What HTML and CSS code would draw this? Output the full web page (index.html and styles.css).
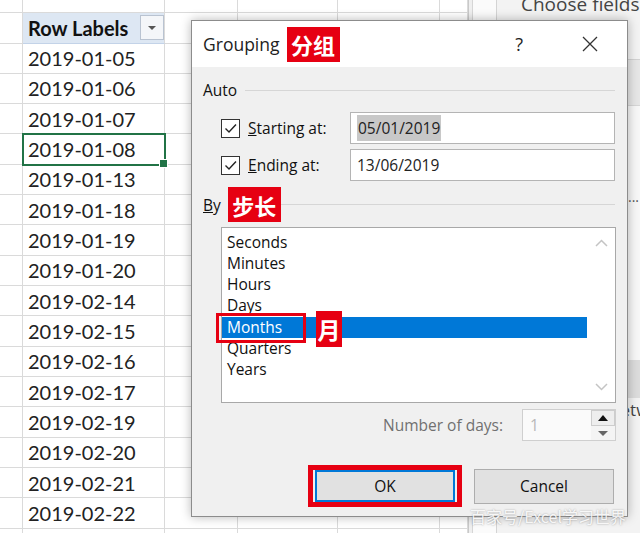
FILE: index.html
```html
<!DOCTYPE html>
<html lang="en">
<head>
<meta charset="utf-8">
<title>Grouping</title>
<link rel="stylesheet" href="styles.css">
</head>
<body>
<div class="app">
  <div class="sheet">
    <div class="row top"><span class="c"></span><span class="c"></span><span class="c"></span><span class="c"></span><span class="c"></span><span class="c"></span></div>
    <div class="row head"><span class="c"></span><span class="c hcell"><span class="htext">Row Labels</span><span class="dd"><span class="tri"></span></span></span><span class="c"></span><span class="c"></span><span class="c"></span><span class="c"></span></div>
    <div class="row"><span class="c"></span><span class="c lab">2019-01-05</span><span class="c"></span><span class="c"></span><span class="c"></span><span class="c"></span></div>
    <div class="row"><span class="c"></span><span class="c lab">2019-01-06</span><span class="c"></span><span class="c"></span><span class="c"></span><span class="c"></span></div>
    <div class="row"><span class="c"></span><span class="c lab">2019-01-07</span><span class="c"></span><span class="c"></span><span class="c"></span><span class="c"></span></div>
    <div class="row"><span class="c"></span><span class="c lab sel">2019-01-08</span><span class="c"></span><span class="c"></span><span class="c"></span><span class="c"></span></div>
    <div class="row"><span class="c"></span><span class="c lab">2019-01-13</span><span class="c"></span><span class="c"></span><span class="c"></span><span class="c"></span></div>
    <div class="row"><span class="c"></span><span class="c lab">2019-01-18</span><span class="c"></span><span class="c"></span><span class="c"></span><span class="c"></span></div>
    <div class="row"><span class="c"></span><span class="c lab">2019-01-19</span><span class="c"></span><span class="c"></span><span class="c"></span><span class="c"></span></div>
    <div class="row"><span class="c"></span><span class="c lab">2019-01-20</span><span class="c"></span><span class="c"></span><span class="c"></span><span class="c"></span></div>
    <div class="row"><span class="c"></span><span class="c lab">2019-02-14</span><span class="c"></span><span class="c"></span><span class="c"></span><span class="c"></span></div>
    <div class="row"><span class="c"></span><span class="c lab">2019-02-15</span><span class="c"></span><span class="c"></span><span class="c"></span><span class="c"></span></div>
    <div class="row"><span class="c"></span><span class="c lab">2019-02-16</span><span class="c"></span><span class="c"></span><span class="c"></span><span class="c"></span></div>
    <div class="row"><span class="c"></span><span class="c lab">2019-02-17</span><span class="c"></span><span class="c"></span><span class="c"></span><span class="c"></span></div>
    <div class="row"><span class="c"></span><span class="c lab">2019-02-19</span><span class="c"></span><span class="c"></span><span class="c"></span><span class="c"></span></div>
    <div class="row"><span class="c"></span><span class="c lab">2019-02-20</span><span class="c"></span><span class="c"></span><span class="c"></span><span class="c"></span></div>
    <div class="row"><span class="c"></span><span class="c lab">2019-02-21</span><span class="c"></span><span class="c"></span><span class="c"></span><span class="c"></span></div>
    <div class="row"><span class="c"></span><span class="c lab">2019-02-22</span><span class="c"></span><span class="c"></span><span class="c"></span><span class="c"></span></div>
    <div class="row"><span class="c"></span><span class="c"></span><span class="c"></span><span class="c"></span><span class="c"></span><span class="c"></span></div>
  </div>
  <div class="divider"><span class="split"></span><span class="gutter"></span></div>
  <div class="pane">
    <div class="p-head"><span class="p-title">Choose fields to add to report:</span></div>
    <div class="p-search"></div>
    <div class="p-list"><span class="p-more">···</span></div>
    <div class="p-band"></div>
    <div class="p-areas"><span class="p-text">Drag fields between areas below:</span></div>
  </div>
</div>

<div class="dialog">
  <div class="titlebar">
    <span class="title">Grouping</span>
    <span class="tag tag-title">分组</span>
    <span class="help">?</span>
    <svg class="close" width="16" height="16" viewBox="0 0 16 16"><path d="M1 1L15 15M15 1L1 15"/></svg>
  </div>
  <div class="dbody">
    <div class="ghead">
      <span class="gname">Auto</span>
      <span class="rule"></span>
    </div>
    <div class="field">
      <span class="chk"><svg width="17" height="17" viewBox="0 0 17 17"><path d="M3.5 8.5L7 12L14 4.5"/></svg></span>
      <span class="flabel"><u>S</u>tarting at:</span>
      <span class="input"><span class="hl">05/01/2019</span></span>
    </div>
    <div class="field">
      <span class="chk"><svg width="17" height="17" viewBox="0 0 17 17"><path d="M3.5 8.5L7 12L14 4.5"/></svg></span>
      <span class="flabel"><u>E</u>nding at:</span>
      <span class="input">13/06/2019</span>
    </div>
    <div class="ghead by">
      <span class="gname"><u>B</u>y</span>
      <span class="tag tag-by">步长</span>
      <span class="rule"></span>
    </div>
    <div class="listbox">
      <ul class="items">
        <li>Seconds</li>
        <li>Minutes</li>
        <li>Hours</li>
        <li>Days</li>
        <li class="selected">Months</li>
        <li>Quarters</li>
        <li>Years</li>
      </ul>
      <div class="vscroll">
        <svg width="13" height="8" viewBox="0 0 13 8"><path d="M1 7L6.5 1.5L12 7"/></svg>
        <svg width="13" height="8" viewBox="0 0 13 8"><path d="M1 1L6.5 6.5L12 1"/></svg>
      </div>
      <span class="mark"></span>
      <span class="tag tag-month">月</span>
    </div>
    <div class="days">
      <span class="dlabel">Number of days:</span>
      <span class="spin">
        <span class="val">1</span>
        <span class="spinbtns"><span class="sb up"><span class="t-up"></span></span><span class="sb down"><span class="t-down"></span></span></span>
      </span>
    </div>
    <div class="buttons">
      <span class="okwrap"><span class="btn ok">OK</span></span>
      <span class="btn cancel">Cancel</span>
    </div>
  </div>
</div>

<div class="watermark">百家号/Excel学习世界</div>
</body>
</html>
```

FILE: styles.css
```css
* { box-sizing: border-box; margin: 0; padding: 0; }
html, body { width: 640px; height: 533px; overflow: hidden; background: #fff; }
body { position: relative; font-family: "Open Sans", "Noto Sans", sans-serif; color: #111; }

.app { display: flex; height: 533px; }

/* spreadsheet */
.sheet { width: 468px; flex: none; font-family: Lato, "Open Sans", sans-serif; font-size: 20px; color: #222; }
.row { display: flex; height: 30.33px; }
.row.top { height: 13px; }
.row.head { height: 30.5px; }
.c { flex: none; height: 100%; border-right: 1px solid #dadada; border-bottom: 1px solid #dadada; }
.c:nth-child(1) { width: 23px; }
.c:nth-child(2) { width: 142px; }
.c:nth-child(3) { width: 73px; }
.c:nth-child(4) { width: 100px; }
.c:nth-child(5) { width: 102px; }
.c:nth-child(6) { width: 28px; }
.lab { display: flex; align-items: center; padding-left: 5px; }
.hcell { display: flex; align-items: center; justify-content: space-between; padding-left: 5px; background: #dde7f3; border-bottom-color: #c3d3e8; }
.htext { font-weight: 700; color: #111; font-size: 20px; }
.dd { width: 24px; height: 25px; border: 1px solid #b9c3d1; background: #f4f6f9; display: flex; align-items: center; justify-content: center; }
.tri { width: 0; height: 0; border-left: 4px solid transparent; border-right: 4px solid transparent; border-top: 4px solid #555; }
.sel { position: relative; outline: 2px solid #217346; outline-offset: -1px; }
.sel::after { content: ""; position: absolute; right: -4px; bottom: -4px; width: 7px; height: 7px; background: #217346; border: 1px solid #fff; }

.divider { width: 29px; flex: none; display: flex; }
.split { width: 5px; border-left: 1px solid #c9c9c9; border-right: 1px solid #d6d6d6; background: #efefef; }
.gutter { flex: 1; background: #fbfbfb; border-right: 1px solid #d4d4d4; }

.pane { flex: 1; display: flex; flex-direction: column; background: #f3f3f3; overflow: hidden; }
.p-head { height: 60px; padding-left: 24px; border-bottom: 1px solid #d2d2d2; }
.p-title { display: block; margin-top: -9px; font-size: 19px; color: #444; white-space: nowrap; }
.p-search { height: 46px; background: #e6e6e6; border-bottom: 1px solid #d6d6d6; }
.p-list { height: 254px; background: #f7f7f7; display: flex; justify-content: flex-end; padding-top: 88px; }
.p-more { font-size: 14px; color: #555; margin-right: 1px; line-height: 14px; }
.p-band { height: 38px; background: #dcdcdc; }
.p-areas { flex: 1; background: #f3f3f3; }
.p-text { display: block; font-size: 17px; color: #444; white-space: nowrap; padding-left: 24px; }

/* dialog */
.dialog { position: absolute; left: 191px; top: 20px; width: 437px; height: 497px; border: 1px solid #8c8c8c; background: #f0f0f0; box-shadow: 0 0 10px rgba(0,0,0,0.28); display: flex; flex-direction: column; }
.titlebar { height: 46px; background: #fff; display: flex; align-items: center; padding-left: 11px; padding-right: 29px; }
.title { font-size: 17.5px; color: #222; }
.tag { background: #e60012; color: #fff; font-family: "Noto Sans CJK SC", sans-serif; font-weight: 700; display: inline-flex; align-items: center; justify-content: center; }
.tag-title { margin-left: 7px; width: 53px; height: 35px; font-size: 22px; }
.help { margin-left: auto; font-size: 18px; color: #222; margin-right: 59px; }
.close { fill: none; stroke: #333; stroke-width: 1.3; }

.dbody { flex: 1; padding: 0 12px 0 11px; display: flex; flex-direction: column; }
.ghead { display: flex; align-items: center; margin-top: 12px; height: 22px; font-size: 15.5px; }
.gname { color: #111; }
.rule { flex: 1; height: 1px; background: #d6d6d6; margin-left: 8px; }
.ghead.by { margin-top: 6px; height: 35px; }
.tag-by { margin-left: 7px; width: 53px; height: 35px; font-size: 22px; }
.ghead.by .rule { margin-left: 0; }

.field { display: flex; align-items: center; height: 32px; margin-top: 11px; font-size: 15.5px; }
.field + .field { margin-top: 5px; }
.chk { width: 19px; height: 19px; margin-left: 18px; border: 1px solid #333; background: #fff; display: flex; align-items: center; justify-content: center; }
.chk svg { fill: none; stroke: #222; stroke-width: 1.4; }
.flabel { margin-left: 8px; color: #111; }
.input { margin-left: auto; width: 265px; height: 32px; background: #fff; border: 1px solid #b4b4b4; display: flex; align-items: center; padding-left: 6px; color: #222; }
.hl { background: #c8c8c8; padding: 2px 1px 2px 1px; }

.listbox { position: relative; margin-top: 5px; margin-left: 18px; width: 395px; height: 176px; background: #fff; border: 1px solid #a8a8a8; display: flex; }
.items { list-style: none; width: 365px; padding-top: 3.5px; font-size: 15.5px; }
.items li { height: 21.3px; line-height: 21.3px; padding-left: 5px; color: #111; }
.items li.selected { background: #0078d7; color: #fff; }
.vscroll { flex: 1; display: flex; flex-direction: column; justify-content: space-between; align-items: center; padding: 11px 0 11px; }
.vscroll svg { fill: none; stroke: #c4c4c4; stroke-width: 1.5; }
.mark { position: absolute; left: -6px; top: 85px; width: 90px; height: 30px; border: 3px solid #e60012; }
.tag-month { position: absolute; left: 94px; top: 83px; width: 26px; height: 36px; font-size: 23px; }

.days { display: flex; justify-content: flex-end; align-items: center; margin-top: 6px; height: 32px; font-size: 15.5px; }
.dlabel { color: #707070; margin-right: 19px; }
.spin { width: 94px; height: 32px; border: 1px solid #cfcfcf; background: #fafafa; display: flex; align-items: center; padding-left: 7px; margin-right: -1px; }
.val { color: #b8b8b8; flex: 1; }
.spinbtns { width: 24px; height: 30px; display: flex; flex-direction: column; }
.sb { flex: 1; display: flex; align-items: center; justify-content: center; }
.sb.up { background: #eeeeee; border: 1px solid #cdcdcd; }
.sb.down { background: #f4f4f4; }
.t-up { width: 0; height: 0; border-left: 5px solid transparent; border-right: 5px solid transparent; border-bottom: 6px solid #111; }
.t-down { width: 0; height: 0; border-left: 5px solid transparent; border-right: 5px solid transparent; border-top: 5px solid #666; }

.buttons { display: flex; justify-content: flex-end; align-items: center; margin-top: 24px; font-size: 15.5px; }
.okwrap { border: 5px solid #e60012; padding: 0 2px; display: flex; margin-right: 12px; }
.btn { display: flex; align-items: center; justify-content: center; background: #e1e1e1; color: #111; }
.btn.ok { width: 140px; height: 32px; border: 2px solid #0078d7; }
.btn.cancel { width: 140px; height: 35px; border: 1px solid #adadad; margin-right: 1px; }

.watermark { position: absolute; left: 470px; top: 504px; font-family: "Noto Sans CJK SC", sans-serif; font-size: 16px; color: rgba(255,255,255,0.9); text-shadow: 0 0 2px rgba(0,0,0,0.35); white-space: nowrap; }
```
